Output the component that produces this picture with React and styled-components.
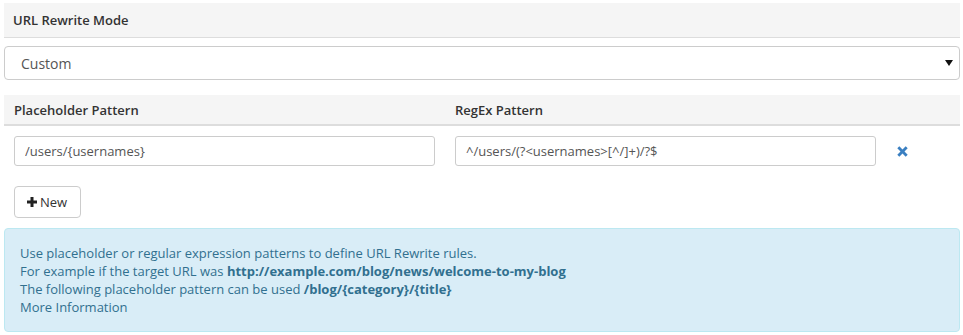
import React from 'react'
import styled, { createGlobalStyle } from 'styled-components'

const GlobalStyle = createGlobalStyle`
  body {
    margin: 0;
    background: #fff;
    font-family: "Open Sans", "Liberation Sans", Arial, sans-serif;
    font-size: 13px;
    color: #333;
  }
`

const Page = styled.div`
  padding: 3px 3px 0 4px;
`

const SectionHeader = styled.div`
  background: #f5f5f5;
  border-bottom: 1px solid #ddd;
  height: 34px;
  display: flex;
  align-items: center;
  padding: 0 9px;
  font-weight: 600;
  font-size: 13px;
  color: #333;
`

const SelectWrap = styled.div`
  position: relative;
  margin-top: 8px;
`

const Select = styled.select`
  display: block;
  width: 100%;
  height: 34px;
  box-sizing: border-box;
  appearance: none;
  border: 1px solid #ccc;
  border-radius: 4px;
  background: #fff;
  padding: 0 16px;
  font-family: inherit;
  font-size: 14px;
  color: #555;
`

const Caret = styled.svg`
  position: absolute;
  right: 7px;
  top: 14px;
  pointer-events: none;
`

const Table = styled.table`
  width: 100%;
  margin-top: 15px;
  border-collapse: collapse;
  table-layout: fixed;
`

const Th = styled.th`
  box-sizing: border-box;
  background: #f5f5f5;
  border-bottom: 2px solid #ddd;
  text-align: left;
  font-weight: 600;
  height: 30px;
  padding: 0 10px;
  width: ${p => p.$w || 'auto'};
`

const Td = styled.td`
  padding: 10px;
  vertical-align: middle;
`

const Input = styled.input`
  display: block;
  width: 100%;
  height: 30px;
  box-sizing: border-box;
  border: 1px solid #ccc;
  border-radius: 3px;
  padding: 0 10px;
  font-family: inherit;
  font-size: 13px;
  color: #555;
`

const RemoveButton = styled.button`
  border: 0;
  background: none;
  padding: 0 0 0 1px;
  display: flex;
  cursor: pointer;
`

const NewButton = styled.button`
  margin: 10px 0 0 10px;
  height: 32px;
  display: inline-flex;
  align-items: center;
  gap: 3px;
  padding: 0 13px 0 12px;
  border: 1px solid #ccc;
  border-radius: 4px;
  background: #fff;
  font-family: inherit;
  font-size: 13px;
  color: #333;
`

const Alert = styled.div`
  margin-top: 10px;
  padding: 15px;
  background: #d9edf7;
  border: 1px solid #bce8f1;
  border-radius: 4px;
  color: #31708f;
  line-height: 18px;

  b {
    font-weight: 700;
  }
`

const Plus = () => (
  <svg width="10" height="10" viewBox="0 0 10 10">
    <path d="M3.5 0h3v3.5H10v3H6.5V10h-3V6.5H0v-3h3.5z" fill="#222" />
  </svg>
)

const Cross = () => (
  <svg width="11" height="11" viewBox="0 0 11 11">
    <path
      d="M2.3 0.3L5.5 3.5L8.7 0.3L10.7 2.3L7.5 5.5L10.7 8.7L8.7 10.7L5.5 7.5L2.3 10.7L0.3 8.7L3.5 5.5L0.3 2.3z"
      fill="#3a7fc1"
    />
  </svg>
)

export default function App() {
  return (
    <Page>
      <GlobalStyle />
      <SectionHeader>URL Rewrite Mode</SectionHeader>
      <SelectWrap>
        <Select defaultValue="custom">
          <option value="custom">Custom</option>
        </Select>
        <Caret width="8" height="6" viewBox="0 0 8 6">
          <path d="M0 0h8L4 6z" fill="#111" />
        </Caret>
      </SelectWrap>
      <Table>
        <thead>
          <tr>
            <Th $w="441px">Placeholder Pattern</Th>
            <Th $w="441px">RegEx Pattern</Th>
            <Th />
          </tr>
        </thead>
        <tbody>
          <tr>
            <Td><Input defaultValue="/users/{usernames}" /></Td>
            <Td><Input defaultValue="^/users/(?<usernames>[^/]+)/?$" /></Td>
            <Td>
              <RemoveButton aria-label="Remove"><Cross /></RemoveButton>
            </Td>
          </tr>
        </tbody>
      </Table>
      <NewButton><Plus />New</NewButton>
      <Alert>
        Use placeholder or regular expression patterns to define URL Rewrite rules.<br />
        For example if the target URL was <b>http://example.com/blog/news/welcome-to-my-blog</b><br />
        The following placeholder pattern can be used <b>/blog/{'{category}'}/{'{title}'}</b><br />
        More Information
      </Alert>
    </Page>
  )
}
